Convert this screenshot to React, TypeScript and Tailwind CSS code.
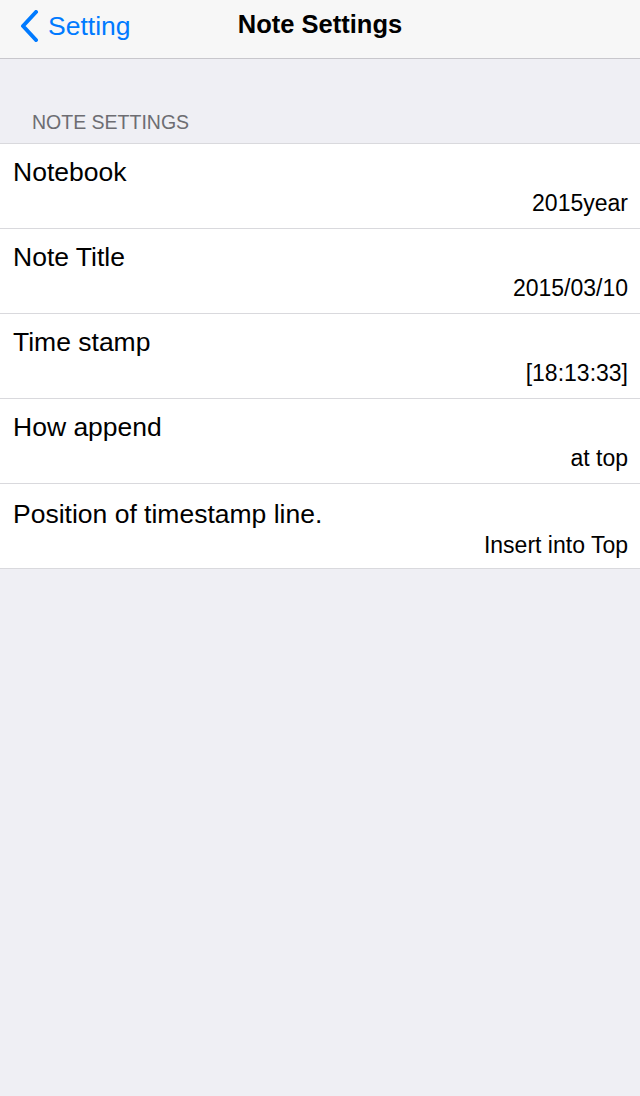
const rows = [
  { title: 'Notebook', value: '2015year' },
  { title: 'Note Title', value: '2015/03/10' },
  { title: 'Time stamp', value: '[18:13:33]' },
  { title: 'How append', value: 'at top' },
  { title: 'Position of timestamp line.', value: 'Insert into Top' },
];

export default function App() {
  return (
    <div className="min-h-[1096px] bg-[#efeff4]" style={{ fontFamily: '"Liberation Sans", Arial, sans-serif' }}>
      <div className="relative h-[59px] bg-[#f7f7f7] border-b border-[#c8c7cc] flex items-center justify-center">
        <button className="absolute left-0 top-0 h-[52px] flex items-center pl-[19px] text-[#007aff]">
          <svg width="20" height="32" viewBox="0 0 20 32" fill="none">
            <path d="M17 2 L4 16 L17 30" stroke="#007aff" strokeWidth="4" strokeLinecap="round" strokeLinejoin="round" />
          </svg>
          <span className="ml-[9px] text-[26.5px] leading-none">Setting</span>
        </button>
        <h1 className="text-[25.5px] font-bold text-black leading-none -mt-[9px]">Note Settings</h1>
      </div>

      <div className="pt-[51px] pb-[9px] pl-[32px] text-[19.5px] leading-[24px] text-[#6d6d72] uppercase">Note Settings</div>

      <div className="bg-white border-t border-[#d9d9dd]">
        {rows.map((r, i) => (
          <div
            key={r.title}
            className={`border-b border-[#d9d9dd] h-[85px] flex flex-col pl-[13px] pr-[12px] ${i === rows.length - 1 ? 'pt-[15px]' : 'pt-[13px]'}`}
          >
            <div className="text-[26.5px] leading-[30px] text-black">{r.title}</div>
            <div className="mt-[3px] text-right text-[23px] leading-[26px] text-black">{r.value}</div>
          </div>
        ))}
      </div>
    </div>
  );
}
